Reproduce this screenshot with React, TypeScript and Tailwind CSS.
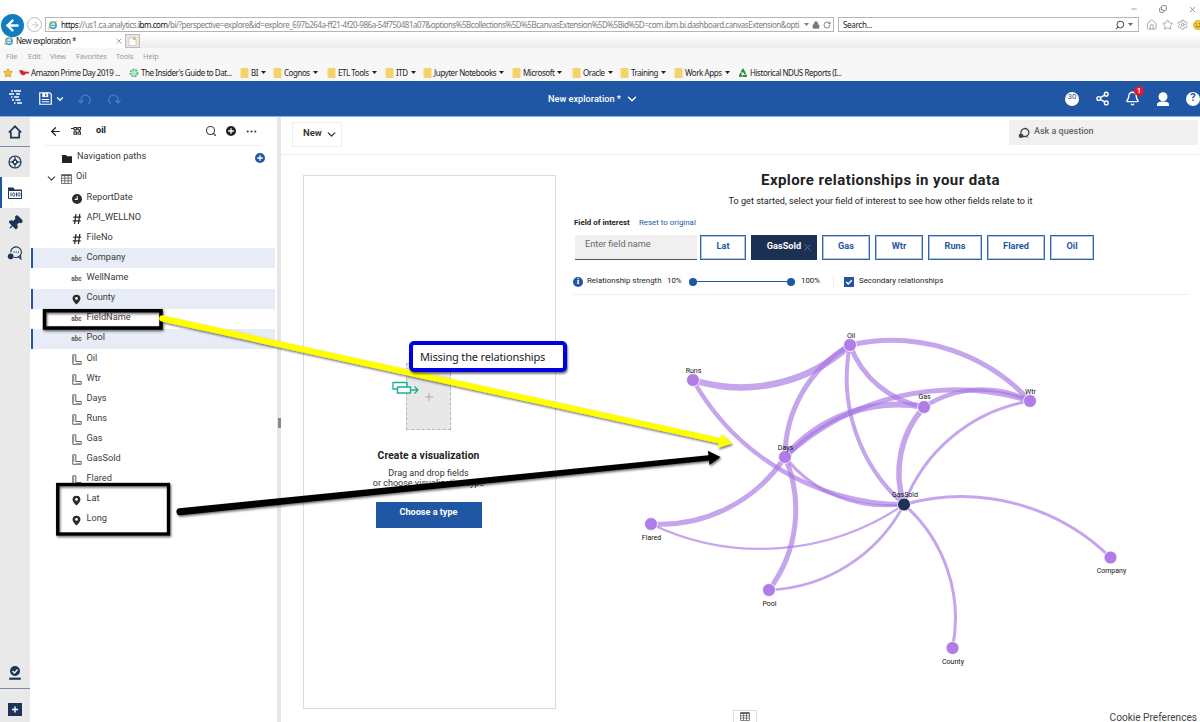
import type { ReactNode } from "react";
import {
  ArrowLeft,
  ArrowRight,
  Bell,
  ChevronDown,
  Copy,
  House,
  Lock,
  Minus,
  MoreHorizontal,
  Pin,
  RotateCw,
  Search,
  Settings,
  Share2,
  Star,
  X,
} from "lucide-react";

const bookmarks = [
  { label: "Amazon Prime Day 2019 ...", width: "w-[110px]", icon: "amazon" },
  { label: "The Insider's Guide to Dat...", width: "w-[111px]", icon: "insider" },
  { label: "BI", width: "w-[33px]", icon: "folder" },
  { label: "Cognos", width: "w-[54px]", icon: "folder" },
  { label: "ETL Tools", width: "w-[58px]", icon: "folder" },
  { label: "ITD", width: "w-[38px]", icon: "folder" },
  { label: "Jupyter Notebooks", width: "w-[89px]", icon: "folder" },
  { label: "Microsoft", width: "w-[60px]", icon: "folder" },
  { label: "Oracle", width: "w-[48px]", icon: "folder" },
  { label: "Training", width: "w-[54px]", icon: "folder" },
  { label: "Work Apps", width: "w-[64px]", icon: "folder" },
  { label: "Historical NDUS Reports (I...", width: "w-[120px]", icon: "recycle" },
];

const fields = [
  { name: "ReportDate", type: "date" },
  { name: "API_WELLNO", type: "number" },
  { name: "FileNo", type: "number" },
  { name: "Company", type: "text", selected: true },
  { name: "WellName", type: "text" },
  { name: "County", type: "geo", selected: true },
  { name: "FieldName", type: "text" },
  { name: "Pool", type: "text", selected: true },
  { name: "Oil", type: "measure" },
  { name: "Wtr", type: "measure" },
  { name: "Days", type: "measure" },
  { name: "Runs", type: "measure" },
  { name: "Gas", type: "measure" },
  { name: "GasSold", type: "measure" },
  { name: "Flared", type: "measure" },
  { name: "Lat", type: "geo" },
  { name: "Long", type: "geo" },
];

const chips = [
  { name: "Lat", width: "w-[46px]" },
  { name: "GasSold", width: "w-[66px]", active: true },
  { name: "Gas", width: "w-[48px]" },
  { name: "Wtr", width: "w-[48px]" },
  { name: "Runs", width: "w-[54px]" },
  { name: "Flared", width: "w-[58px]" },
  { name: "Oil", width: "w-[44px]" },
];

type GraphNode = { x: number; y: number; lx: number; ly: number };

const nodes: Record<string, GraphNode> = {
  Oil: { x: 850, y: 345, lx: 851, ly: 338 },
  Runs: { x: 693, y: 380, lx: 693.5, ly: 373 },
  Gas: { x: 924, y: 407, lx: 924.5, ly: 399 },
  Wtr: { x: 1030, y: 401, lx: 1030.5, ly: 394 },
  Days: { x: 785, y: 457, lx: 785.5, ly: 449.5 },
  GasSold: { x: 904, y: 504.5, lx: 905, ly: 497 },
  Flared: { x: 651, y: 524, lx: 651.5, ly: 540 },
  Pool: { x: 769, y: 590, lx: 769.5, ly: 606 },
  Company: { x: 1110.5, y: 557.5, lx: 1111.5, ly: 573 },
  County: { x: 952.5, y: 648, lx: 953, ly: 664 },
};

// [from, to, sweep flag, stroke width]
const links: [string, string, number, number][] = [
  ["Runs", "Oil", 0, 6.5],
  ["Days", "Oil", 1, 5],
  ["Oil", "Wtr", 1, 5],
  ["Oil", "Gas", 0, 5],
  ["Oil", "GasSold", 0, 4],
  ["Days", "Gas", 1, 6],
  ["Days", "Wtr", 1, 5],
  ["Gas", "Wtr", 1, 4.5],
  ["Gas", "GasSold", 0, 5.5],
  ["Wtr", "GasSold", 0, 3],
  ["Runs", "GasSold", 0, 4.5],
  ["Days", "GasSold", 0, 3],
  ["Days", "Flared", 1, 5],
  ["Days", "Pool", 1, 5],
  ["Flared", "GasSold", 0, 2.2],
  ["GasSold", "Pool", 1, 2.8],
  ["GasSold", "County", 1, 3],
  ["GasSold", "Company", 1, 3],
];

function arc(from: GraphNode, to: GraphNode, sweep: number) {
  const r = Math.hypot(to.x - from.x, to.y - from.y);
  return `M${from.x} ${from.y}A${r} ${r} 0 0 ${sweep} ${to.x} ${to.y}`;
}

function IeLogo({ className }: { className?: string }) {
  return (
    <svg viewBox="0 0 12 12" className={className}>
      <circle cx="6" cy="6.2" r="3.7" fill="none" stroke="#41a9e0" strokeWidth="2.2" />
      <path d="M3 6.4h6.4" stroke="#41a9e0" strokeWidth="1.5" />
      <path d="M1.5 11C-.5 8 7 .6 11 1.5" fill="none" stroke="#e9b934" strokeWidth="1.3" />
    </svg>
  );
}

function Caret({ className = "" }: { className?: string }) {
  return (
    <svg viewBox="0 0 5 3" className={`h-[3px] w-[5px] shrink-0 ${className}`}>
      <path d="M0 0h5L2.5 3z" fill="currentColor" />
    </svg>
  );
}

function BookmarkIcon({ type }: { type: string }) {
  if (type === "folder") {
    return (
      <svg viewBox="0 0 9 10" className="h-[10px] w-[9px] shrink-0">
        <path d="M0 0h7.5l1 1v9H0z" fill="#f5d36b" />
        <path d="M0 0h1.2v10H0z" fill="#fbe7a4" />
      </svg>
    );
  }
  if (type === "amazon") {
    return (
      <svg viewBox="0 0 10 8" className="h-2 w-[10px] shrink-0">
        <path d="M0 1.5l3-.5 2 1.500 5 .3v1.700H7L5 6.500 2 5.500z" fill="#d3282f" />
      </svg>
    );
  }
  return (
    <svg viewBox="0 0 10 10" className="h-[10px] w-[10px] shrink-0">
      {type === "insider" ? (
        <circle cx="5" cy="5" r="3.6" fill="#b8e6c8" stroke="#4cb774" strokeWidth="1.6" strokeDasharray="2 1" />
      ) : (
        <path d="M5 1.6L8.2 8H1.8z" fill="none" stroke="#2e8b2e" strokeWidth="1.9" strokeLinejoin="round" strokeDasharray="5 .8" />
      )}
    </svg>
  );
}

function FieldIcon({ type }: { type: string }) {
  switch (type) {
    case "date":
      return (
        <svg viewBox="0 0 10 10" className="h-[10px] w-[10px]">
          <circle cx="5" cy="5" r="5" fill="#2b2b2b" />
          <path d="M5.2 2.2v3.2H2.8" fill="none" stroke="#fff" strokeWidth="1.1" />
        </svg>
      );
    case "number":
      return (
        <svg viewBox="0 0 10 12" className="h-3 w-[10px]">
          <path d="M4 1L2.6 11M7.8 1L6.4 11M1.2 4.2h8M.7 7.8h8" stroke="#2b2b2b" strokeWidth="1.3" />
        </svg>
      );
    case "text":
      return <span className="text-[6.400px] leading-none font-bold text-[#555]">abc</span>;
    case "geo":
      return (
        <svg viewBox="0 0 10 12" className="h-[11px] w-[9px]">
          <path d="M5 .6a4.4 4.4 0 0 1 4.4 4.4C9.4 8 5 11.6 5 11.6S.6 8 .6 5A4.4 4.4 0 0 1 5 .6z" fill="#2b2b2b" />
          <circle cx="5" cy="4.8" r="1.5" fill="#fff" />
        </svg>
      );
    default:
      return (
        <svg viewBox="0 0 10 11" className="h-[11px] w-[10px]" fill="none" stroke="#3d3d3d" strokeWidth=".8">
          <path d="M.8 10.300V.8h3v6.700M3.800 7.500h5.400v2.800H.8" />
          <path d="M1 3h1.300M1 5h1.300M1 7h1.300M5 10V9M7 10V9" />
        </svg>
      );
  }
}

function TableIcon({ className }: { className?: string }) {
  return (
    <svg viewBox="0 0 11 10" className={className} fill="none" stroke="#555" strokeWidth=".8">
      <path d="M.5 1h10v8.5H.5zM.5 4.2h10M.5 6.8h10M3.8 2v7.5M7.2 2v7.5" />
      <path d="M.5 1.2h10" strokeWidth="1.8" />
    </svg>
  );
}

function ChatIcon({ className, color }: { className?: string; color: string }) {
  return (
    <svg viewBox="0 0 12 12" className={className}>
      <path d="M3 6.500a4 4 0 1 1 3.600 3H5" fill="none" stroke={color} strokeWidth="1.300" />
      <path d="M8.500 8.500l2.200 2.800-3.200-1.800" fill={color} />
      <circle cx="3" cy="8.800" r="2.300" fill={color} />
    </svg>
  );
}

function UndoIcon({ className = "" }: { className?: string }) {
  return (
    <svg viewBox="0 0 14 12" className={`h-3 w-[14px] text-[#4f80c4] ${className}`} fill="none" stroke="currentColor" strokeWidth="1.200">
      <path d="M3 9.500V6.200a4.700 4.700 0 1 1 7.500 4.300" />
      <path d="M.5 7.200L3 9.800l2.500-2.600" />
    </svg>
  );
}

function BrowserChrome() {
  return (
    <header className="h-[81px] bg-white font-['Noto_Sans',sans-serif] text-[#222]">
      <div className="flex h-[15px] items-start justify-end gap-[21px] pt-[5px] pr-[3px] text-gray-500">
        <Minus className="size-2" strokeWidth={2} />
        <Copy className="size-2 -scale-x-100 -scale-y-100 rotate-90" strokeWidth={2.5} />
        <X className="size-[9px]" strokeWidth={2} />
      </div>
      <div className="flex h-[19px] items-center">
        <div className="z-10 mt-[1px] ml-px flex size-[23px] shrink-0 items-center justify-center rounded-full bg-[#0f7dc0] text-white">
          <ArrowLeft className="size-[17px]" strokeWidth={3.4} />
        </div>
        <div className="ml-[3px] flex size-[15px] shrink-0 items-center justify-center rounded-full border border-[#bbb] text-[#bbb]">
          <ArrowRight className="size-[10px]" />
        </div>
        <div className="ml-[3px] flex h-[15px] w-[789px] shrink-0 items-center border border-[#b5b5b5] pl-[2px] text-[8px] whitespace-nowrap text-[#7d7d7d]">
          <IeLogo className="size-[10px] shrink-0" />
          <span className="ml-[3px] w-[743px] shrink-0 tracking-[-0.460px]">
            <span className="text-[#111]">https</span>://us1.ca.analytics.<span className="text-[#111]">ibm.com</span>
            /bi/?perspective=explore&amp;id=explore_697b264a-ff21-4f20-986a-54f750481a07&amp;options%5Bcollections%5D%5BcanvasExtension%5D%5Bid%5D=com.ibm.bi.dashboard.canvasExtension&amp;opti
          </span>
          <Caret />
          <Lock className="ml-[3px] size-[8px] shrink-0 fill-[#777]" />
          <RotateCw className="ml-[3px] size-[8px] shrink-0" strokeWidth={2.8} />
        </div>
        <div className="ml-[4px] flex h-[15px] w-[301px] shrink-0 items-center border border-[#b5b5b5] pr-[5px] pl-[4px] text-[8px]">
          <span className="flex-1 tracking-[-0.300px]">Search...</span>
          <Search className="size-[10px] -scale-x-100 text-[#555]" strokeWidth={2.500} />
          <Caret className="ml-[3px] text-[#666]" />
        </div>
        <div className="ml-[7px] flex items-center gap-[4px] text-[#999]">
          <House className="size-[11.500px] shrink-0" strokeWidth={1.8} />
          <Star className="size-[11.500px] shrink-0" strokeWidth={1.8} />
          <Settings className="size-[11.500px] shrink-0" strokeWidth={1.8} />
          <svg viewBox="0 0 10 10" className="size-[10px] shrink-0">
            <circle cx="5" cy="5" r="4.6" fill="#f3cb3c" stroke="#c29a1d" strokeWidth=".6" />
            <path d="M3.2 3v1.4M6.5 3v1.4M2.5 6.2q2.5 2 5 0" stroke="#6c5411" fill="none" strokeWidth=".8" />
          </svg>
        </div>
      </div>
      <div className="flex h-[14px] items-stretch bg-gradient-to-b from-white to-[#ebebeb]">
        <div className="flex w-[125px] items-center bg-white pl-[4px] text-[8px]">
          <IeLogo className="size-[10px]" />
          <span className="ml-[2px] flex-1 whitespace-nowrap tracking-[-0.480px]">New exploration *</span>
          <X className="mr-[2px] size-2 text-[#777]" />
        </div>
        <div className="flex w-[15px] items-center justify-center border border-[#bbb] bg-[#e6e6e6]">
          <svg viewBox="0 0 9 9" className="size-[9px]">
            <path d="M1 1h4.5L8 3.500V8.500H1z" fill="#fff" stroke="#aaa" strokeWidth=".5" />
            <path d="M5 0h3v3H5z" fill="#edbd5b" />
          </svg>
        </div>
      </div>
      <div className="flex h-[17px] items-center bg-[#f7f7f7] pl-[6px] text-[7.500px] tracking-[-0.150px] text-[#9a9a9a]">
        <span className="w-[22px]">File</span>
        <span className="w-[22px]">Edit</span>
        <span className="w-[26px]">View</span>
        <span className="w-[40px]">Favorites</span>
        <span className="w-[27px]">Tools</span>
        <span>Help</span>
      </div>
      <div className="flex h-4 items-center bg-[#f7f7f7] pb-px pl-[3px] text-[8px] tracking-[-0.450px] whitespace-nowrap">
        <div className="w-4 shrink-0">
          <Star className="size-[10px] fill-[#f5c63c] text-[#c99b25]" />
        </div>
        {bookmarks.map((b) => (
          <div key={b.label} className={`flex shrink-0 items-center ${b.width}`}>
            <BookmarkIcon type={b.icon} />
            <span className="ml-[2px]">{b.label}</span>
            {b.icon === "folder" && <Caret className="ml-[3px]" />}
          </div>
        ))}
      </div>
    </header>
  );
}

function AppBar() {
  return (
    <div className="relative flex h-[36px] items-center border-b border-[#8fb2e4] bg-[#1f57a4] text-white">
      <svg viewBox="0 0 15 16" className="mb-1 ml-2 h-4 w-[15px] shrink-0" stroke="#fff" strokeWidth="1.400">
        <path d="M3 2h2M6 2h7M1 5h5M8 5h4M3 8h1.5M6 8h5M4 11h2M7.5 11h5M6 14h1.5M9 14h5" />
      </svg>
      <svg viewBox="0 0 14 14" className="ml-4 size-[13px] shrink-0" fill="none" stroke="#fff" strokeWidth="1.300">
        <path d="M.8.8h10.700l1.700 1.700v10.700H.8z" />
        <path d="M3.500 1h6.500v4.500H3.500z" fill="#fff" stroke="none" />
        <path d="M7.200 2v2.500" stroke="#1f57a4" />
        <path d="M3 8h8M3 10.500h8" strokeWidth="1.100" />
      </svg>
      <ChevronDown className="ml-[3px] size-[10px] shrink-0" strokeWidth={3} />
      <UndoIcon className="ml-[13px] shrink-0" />
      <UndoIcon className="ml-[15px] shrink-0 -scale-x-100" />
      <div className="ml-[427px] flex w-[516px] items-center text-[9.200px] font-medium">
        <span className="w-[72px] whitespace-nowrap">New exploration *</span>
        <ChevronDown className="ml-[5px] size-[14px]" strokeWidth={2.3} />
      </div>
      <div className="ml-auto flex size-[14px] shrink-0 items-start justify-center rounded-full bg-white text-[8px] leading-[10px] text-[#1f57a4]">
        30
      </div>
      <Share2 className="ml-4 size-[15px] shrink-0" strokeWidth={2.2} />
      <div className="relative ml-[15px] shrink-0">
        <Bell className="size-[15px]" strokeWidth={2.2} />
        <span className="absolute -top-[5px] -right-[4px] flex size-[10px] items-center justify-center rounded-full bg-[#e0182d] text-[7px] font-bold">
          1
        </span>
      </div>
      <svg viewBox="0 0 12 14" className="ml-[17px] h-[14px] w-3 shrink-0" fill="#fff">
        <circle cx="6" cy="4.8" r="4.5" />
        <path d="M0 14v-2.5Q1 9.5 6 9.5t6 2V14z" />
      </svg>
      <span className="ml-[17px] flex size-[14px] shrink-0 items-center justify-center rounded-full bg-white text-[11px] font-bold text-[#1f57a4]">
        ?
      </span>
    </div>
  );
}

function RailItem({ children, className = "" }: { children: ReactNode; className?: string }) {
  return <div className={`flex w-[30px] items-center justify-center ${className}`}>{children}</div>;
}

function Rail() {
  return (
    <nav className="flex w-[30px] shrink-0 flex-col bg-[#e9e9e9] text-[#1d3458]">
      <RailItem className="h-[30px] border-b border-[#7b8ba5]">
        <svg viewBox="0 0 14 14" className="size-[14px]" fill="none" stroke="#1d3458" strokeWidth="1.700">
          <path d="M.8 7.500L7 1.300l6.200 6.200M2.800 6.500v6.200h8.400V6.500" />
        </svg>
      </RailItem>
      <RailItem className="h-[30px]">
        <svg viewBox="0 0 14 14" className="size-[14px]" fill="none" stroke="#1d3458">
          <circle cx="7" cy="7" r="6" strokeWidth="1.200" />
          <path d="M7 1v12M1 7h12" />
          <path d="M7 3.800L10.200 7 7 10.200 3.800 7z" fill="#1d3458" />
          <circle cx="7" cy="7" r="1.200" fill="#fff" stroke="none" />
        </svg>
      </RailItem>
      <RailItem className="h-[31px] border-l-2 border-[#1f57a4] bg-white pr-[2px]">
        <svg viewBox="0 0 14 12" className="h-3 w-[14px]" fill="none" stroke="#1d3458">
          <path d="M.5 3.500h13v8H.5z" />
          <path d="M0 .5h5.500l1 2H14v1H0z" fill="#1d3458" stroke="none" />
          <path d="M3 5.500v4M8.500 5.500v4" strokeWidth=".9" />
          <ellipse cx="5.700" cy="7.500" rx="1.100" ry="1.800" strokeWidth=".8" />
          <ellipse cx="11" cy="7.500" rx="1.100" ry="1.800" strokeWidth=".8" />
        </svg>
      </RailItem>
      <RailItem className="h-[30px]">
        <Pin className="size-[16px] rotate-45 fill-[#1d3458]" strokeWidth={2} />
      </RailItem>
      <RailItem className="h-[30px]">
        <svg viewBox="0 0 16 16" className="size-4" fill="none" stroke="#1d3458">
          <path d="M3.800 7.500a5.300 5.300 0 1 1 5.200 5H7M11.500 12l2.500 2-.5-3.500" strokeWidth="1.100" />
          <path d="M6.500 7.200h1M8.700 7.200h1M10.900 7.200h1" strokeWidth="1.200" />
          <circle cx="3.700" cy="11.300" r="2.900" fill="#1d3458" stroke="none" />
        </svg>
      </RailItem>
      <div className="flex-1" />
      <RailItem className="h-[32px] border-b border-[#7b8ba5]">
        <svg viewBox="0 0 12 14" className="h-[14px] w-3" fill="#1d3458">
          <circle cx="6" cy="5" r="5" />
          <path d="M.2 13.800v-2.200h11.600v2.200z" />
          <path d="M3.500 5l2 2 3-3.500" fill="none" stroke="#fff" strokeWidth="1.200" />
        </svg>
      </RailItem>
      <RailItem className="h-[33px] pt-[9px]">
        <svg viewBox="0 0 14 13" className="mb-[1px] h-[13px] w-[14px]">
          <path d="M0 0h14v13H0z" fill="#1d3458" />
          <path d="M7 3.500v6M4 6.500h6" stroke="#fff" strokeWidth="1.400" />
        </svg>
      </RailItem>
    </nav>
  );
}

function PlusCircle({ color }: { color: string }) {
  return (
    <svg viewBox="0 0 10 10" className="size-[10px] shrink-0">
      <circle cx="5" cy="5" r="5" fill={color} />
      <path d="M5 2.200v5.600M2.200 5h5.600" stroke="#fff" strokeWidth="1.300" />
    </svg>
  );
}

function Sidebar() {
  return (
    <aside className="flex w-[247px] shrink-0 flex-col text-[9.200px] text-[#3a3a3a]">
      <div className="ml-[15px] flex h-[29px] w-[216px] items-center border-b border-[#eee] pl-[4px]">
        <ArrowLeft className="size-[13px] text-[#222]" strokeWidth={2.2} />
        <svg viewBox="0 0 10 8" className="ml-[9px] h-2 w-[10px]" fill="none" stroke="#333" strokeWidth="1.100">
          <path d="M0 1.500h3M3 .5h2.500v2.200H3zM7 .5h2.500v2.200H7zM3 5h2.500v2.200H3zM7 5h2.500v2.200H7zM5.500 2h1.500M4 3v2M8.500 3v2" />
        </svg>
        <span className="ml-[15px] flex-1 pb-[2px] font-bold text-[#222]">oil</span>
        <Search className="size-[12px]" strokeWidth={2.2} />
        <div className="ml-[9px]">
          <PlusCircle color="#222" />
        </div>
        <MoreHorizontal className="mr-[3px] ml-[9px] size-[13px]" strokeWidth={2} />
      </div>
      <div className="flex h-[21px] items-center pt-[2px] pl-[32px]">
        <svg viewBox="0 0 10 8" className="mt-[2px] h-2 w-[10px]">
          <path d="M0 0h4l1 1.300h5V8H0z" fill="#222" />
        </svg>
        <span className="ml-[5px] w-[178px] pb-[4px]">Navigation paths</span>
        <PlusCircle color="#1f57a4" />
      </div>
      <div className="flex h-[21px] items-center pl-[15px]">
        <ChevronDown className="mt-[2px] size-[13px]" strokeWidth={2} />
        <TableIcon className="mt-[2px] ml-[3px] h-[10px] w-[11px]" />
        <span className="ml-[4px] pb-[3px]">Oil</span>
      </div>
      {fields.map((f) => (
        <div
          key={f.name}
          className={`ml-[1px] flex h-[20.120px] w-[244px] shrink-0 items-center ${
            f.selected ? "border-l-2 border-[#1f57a4] bg-[#e8ecf6] pl-[37px]" : "pl-[39px]"
          }`}
        >
          <span className="mt-[1px] flex w-[13px] items-center justify-center">
            <FieldIcon type={f.type} />
          </span>
          <span className="ml-[3.500px] pb-[3px]">{f.name}</span>
        </div>
      ))}
    </aside>
  );
}

function VisualizationCard() {
  return (
    <section className="flex h-[534px] w-[253px] shrink-0 flex-col items-center border border-[#dcdcdc] pt-[187px] pr-[2px] text-[#222]">
      <div className="relative flex h-[67px] w-[45px] items-center justify-center border border-dashed border-[#b5b5b5] bg-[#e8e8e8]">
        <svg viewBox="0 0 8 8" className="size-2" stroke="#aaa">
          <path d="M4 0v8M0 4h8" />
        </svg>
        <svg viewBox="0 0 28 14" className="absolute top-[17px] -left-[15px] h-[14px] w-7" fill="none" stroke="#17ae92" strokeWidth="1.300">
          <path d="M5 8H1V1.500h14V6" />
          <path d="M5.500 6h13v6h-13z" fill="#fff" />
          <path d="M18.500 9h7M22.500 5.500L26 9l-3.500 3.500" />
        </svg>
      </div>
      <h2 className="mt-[19px] text-[10.300px] leading-[14px] font-bold tracking-[0.100px]">Create a visualization</h2>
      <p className="mt-[5px] text-center text-[9px] leading-[10px] whitespace-nowrap text-[#333]">
        Drag and drop fields
        <br />
        or choose visualization type
      </p>
      <button className="mt-[14px] h-[26px] w-[106px] bg-[#1f57a4] pb-[4px] text-[9.100px] font-bold text-white">
        Choose a type
      </button>
    </section>
  );
}

function RelationshipControls() {
  return (
    <section className="w-[615px] text-[#222]">
      <h1 className="pt-[1px] text-center text-[15px] leading-[20px] font-bold tracking-[0.420px]">
        Explore relationships in your data
      </h1>
      <p className="mt-[5px] text-center text-[9.100px] leading-[12px]">
        To get started, select your field of interest to see how other fields relate to it
      </p>
      <div className="mt-[10px] flex h-[12px] items-center text-[7.900px]">
        <span className="w-[66px] pl-[1px] font-bold whitespace-nowrap">Field of interest</span>
        <span className="whitespace-nowrap text-[#1f57a4]">Reset to original</span>
      </div>
      <div className="mt-[6px] flex h-[25px] pl-[2px]">
        <div className="w-[122px] border-b border-[#555] bg-[#f0f0f0] pt-[3px] pl-[10px] text-[9.100px] text-[#666]">
          Enter field name
        </div>
        <div className="ml-[3px] flex gap-[5px]">
          {chips.map((c) => (
            <div
              key={c.name}
              className={`relative flex items-center justify-center border pb-[4px] text-[9.200px] font-bold ${c.width} ${
                c.active
                  ? "border-[#1c3054] bg-[#1c3054] text-white"
                  : "border-[#3264ab] bg-white text-[#1f57a4] shadow-[inset_0_0_0_1px_rgba(31,87,164,0.35)]"
              }`}
            >
              {c.name}
              {c.active && <X className="absolute right-[3px] bottom-[6px] size-[11px] text-[#66748d]" />}
            </div>
          ))}
        </div>
      </div>
      <div className="mt-[5px] flex h-[30px] items-center border-b border-[#eee] pt-[4px] text-[7.900px]">
        <span className="flex size-[10px] items-center justify-center rounded-full bg-[#1f57a4] font-['Liberation_Serif',serif] text-[9px] font-bold text-white">
          i
        </span>
        <span className="ml-[4px] w-[80px] pb-[2px] whitespace-nowrap">Relationship strength</span>
        <span className="w-[22px] pb-px">10%</span>
        <span className="size-2 rounded-full bg-[#1f57a4]" />
        <span className="h-px w-[90px] bg-[#1f57a4]" />
        <span className="size-2 rounded-full bg-[#1f57a4]" />
        <span className="ml-[6px] w-[32px] pb-px">100%</span>
        <span className="h-[12px] w-px bg-[#eee]" />
        <svg viewBox="0 0 10 10" className="ml-[10px] size-[10px]">
          <path d="M0 0h10v10H0z" fill="#1f57a4" />
          <path d="M2.200 5l2 2L7.800 3.200" fill="none" stroke="#fff" strokeWidth="1.400" />
        </svg>
        <span className="ml-[5px] pb-[2px]">Secondary relationships</span>
      </div>
    </section>
  );
}

function RelationshipGraph() {
  return (
    <svg
      viewBox="573 295 615 400"
      className="h-[400px] w-[615px] font-['Roboto',sans-serif] text-[7px]"
      textAnchor="middle"
    >
      {links.map(([from, to, sweep, width]) => (
        <path
          key={from + to}
          d={arc(nodes[from], nodes[to], sweep)}
          fill="none"
          stroke="#a675e2"
          strokeOpacity="0.650"
          strokeWidth={width}
        />
      ))}
      {Object.entries(nodes).map(([name, n]) => (
        <g key={name}>
          <circle cx={n.x} cy={n.y} r="6.500" fill={name === "GasSold" ? "#1f3157" : "#b07ce8"} stroke="#fff" strokeWidth=".8" />
          <text x={n.lx} y={n.ly} fill="#111">
            {name}
          </text>
        </g>
      ))}
    </svg>
  );
}

function Annotations() {
  return (
    <>
      <svg viewBox="0 0 1200 722" className="pointer-events-none absolute inset-0 h-[722px] w-[1200px]">
        <defs>
          <filter id="shadow" x="-10%" y="-20%" width="120%" height="150%">
            <feDropShadow dx="1" dy="1.500" stdDeviation="1" floodOpacity=".6" />
          </filter>
        </defs>
        <g filter="url(#shadow)">
          <rect x="44.500" y="310.700" width="116.500" height="17.300" fill="none" stroke="#000" strokeWidth="3.500" />
          <rect x="57.700" y="484.500" width="110.800" height="49.500" fill="none" stroke="#000" strokeWidth="3.300" />
          <path d="M163 315.500L720.500 438l1-4L732 443.500 718 448l1-4.500L161.500 321.500a3 3 0 0 1 1.500-6z" fill="#ffff00" />
          <path d="M179.500 508.200L708.500 455.200l-.7-4.500L720.500 457 709.500 465l-.5-4.500L180.500 515.200a3.500 3.500 0 0 1-1-7z" fill="#000" />
        </g>
      </svg>
      <div className="absolute top-[341px] left-[409px] flex h-[31px] w-[158px] items-center rounded-[5px] border-[4px] border-[#0000e0] bg-white pt-px pl-[7px] font-['Noto_Sans',sans-serif] text-[11px] tracking-[-0.160px] whitespace-nowrap text-[#222] shadow-[1px_2px_2px_rgba(0,0,0,0.5)]">
        Missing the relationships
      </div>
    </>
  );
}

export default function App() {
  return (
    <div className="relative flex h-[722px] w-[1200px] flex-col overflow-hidden bg-white font-['Roboto',sans-serif]">
      <BrowserChrome />
      <AppBar />
      <div className="flex min-h-0 flex-1">
        <Rail />
        <Sidebar />
        <div className="flex w-[4px] shrink-0 items-center bg-[#e6e6e6]">
          <span className="mt-[6px] ml-[1px] h-[10px] w-[3px] bg-[#888]" />
        </div>
        <main className="flex-1">
          <div className="flex h-[38px] items-start justify-between border-b border-[#eee] pr-[2px] pl-[11px]">
            <div className="mt-[5px] flex h-[25px] w-[50px] items-center border border-[#eee] pl-[10px] text-[9.500px] font-semibold text-[#333]">
              <span className="pb-[2px]">New</span>
              <ChevronDown className="ml-[3px] size-[13px]" strokeWidth={2.5} />
            </div>
            <div className="mt-[3px] flex h-[25px] w-[189px] items-center bg-[#f0f0f0] pl-[9px] text-[9px] text-[#666]">
              <ChatIcon className="size-[12px]" color="#444" />
              <span className="ml-[4px] pb-[2px] font-medium">Ask a question</span>
            </div>
          </div>
          <div className="flex gap-[17px] pt-[20px] pl-[22px]">
            <VisualizationCard />
            <div className="-mt-[6px]">
              <RelationshipControls />
              <RelationshipGraph />
            </div>
          </div>
        </main>
      </div>
      <div className="absolute top-[710px] left-[733px] flex h-3 w-6 items-center justify-center border border-b-0 border-[#ddd] bg-white">
        <TableIcon className="h-[9px] w-[10px]" />
      </div>
      <div className="absolute top-[711px] right-[3px] text-[10.100px] leading-[13px] text-[#444]">Cookie Preferences</div>
      <Annotations />
    </div>
  );
}
